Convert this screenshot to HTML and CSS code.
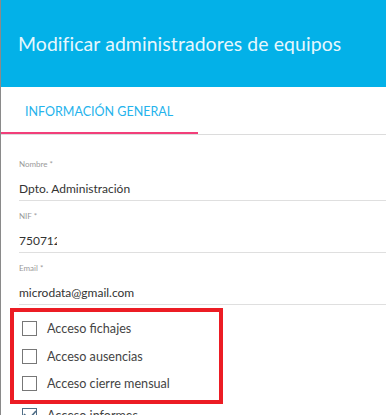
FILE: index.html
```html
<html lang="es"><head>
  <meta charset="UTF-8">
  <title>Modificar administradores de equipos</title>
  <link rel="stylesheet" href="styles.css">
</head>
<body>
  <div class="dialog">
    <div class="dialog-header">
      <h2>Modificar administradores de equipos</h2>
    </div>

    <div class="tabs">
      <div class="tab active">INFORMACIÓN GENERAL</div>
    </div>

    <div class="form">
      <div class="field">
        <label>Nombre *</label>
        <div class="value">Dpto. Administración</div>
      </div>
      <div class="field">
        <label>NIF *</label>
        <div class="value nif">750712</div>
      </div>
      <div class="field">
        <label>Email *</label>
        <div class="value">microdata@gmail.com</div>
      </div>

      <div class="checks">
        <div class="highlight">
          <div class="check"><span class="box"></span>Acceso fichajes</div>
          <div class="check"><span class="box"></span>Acceso ausencias</div>
          <div class="check"><span class="box"></span>Acceso cierre mensual</div>
        </div>
        <div class="check checked">
          <span class="box">
            <svg width="16" height="16" viewBox="0 0 16 16"><path d="M2 6 L7 11 L14 3" fill="none" stroke="#4f6d86" stroke-width="1.6"/></svg>
          </span>Acceso informes
        </div>
      </div>
    </div>
  </div>
</body></html>
```

FILE: styles.css
```css
body {
  margin: 0;
  width: 386px;
  height: 415px;
  overflow: hidden;
  font-family: Lato, "Open Sans", sans-serif;
  background: #fff;
}
.dialog {
  border-left: 1px solid #8a8a8a;
  height: 415px;
}
.dialog-header {
  background-color: #03b1e8;
  height: 87px;
  display: flex;
  align-items: center;
  padding-left: 17px;
}
.dialog-header h2 {
  margin: 0;
  font-size: 19.4px;
  font-weight: normal;
  color: #e6f7fd;
  letter-spacing: 0.1px;
}
.tabs {
  border-bottom: 1px solid #dcdcdc;
  height: 47px;
  display: flex;
}
.tab {
  color: #25b3ec;
  font-size: 12.5px;
  white-space: nowrap;
  box-sizing: border-box;
  width: 197px;
  padding: 17px 0 0 24px;
  border-bottom: 2px solid #f23f7a;
}
.form {
  padding: 14px 0 0 18px;
}
.field {
  border-bottom: 1px solid #dfdfdf;
  height: 52px;
  box-sizing: border-box;
  padding-top: 10px;
}
.field label {
  display: block;
  font-size: 8px;
  color: #9a9a9a;
  height: 13px;
}
.value {
  font-size: 12px;
  color: #333;
  margin-top: 9px;
}
.nif {
  width: 38px;
  overflow: hidden;
  white-space: nowrap;
}
.checks {
  margin-left: -9px;
  padding-top: 3px;
}
.highlight {
  border: 4px solid #ec1c24;
  width: 205px;
  padding: 3px 0 2px 0;
}
.check {
  display: flex;
  align-items: center;
  height: 27.5px;
  padding-left: 8px;
  font-size: 12.6px;
  color: #444;
}
.box {
  width: 13px;
  height: 13px;
  border: 1.5px solid #777;
  margin-right: 10px;
  display: inline-block;
}
.checked {
  padding-left: 12px;
  margin-top: -2px;
}
.checked .box {
  border-color: #4f6d86;
  position: relative;
}
.checked svg {
  position: absolute;
  left: -1px;
  top: -1px;
}
```
